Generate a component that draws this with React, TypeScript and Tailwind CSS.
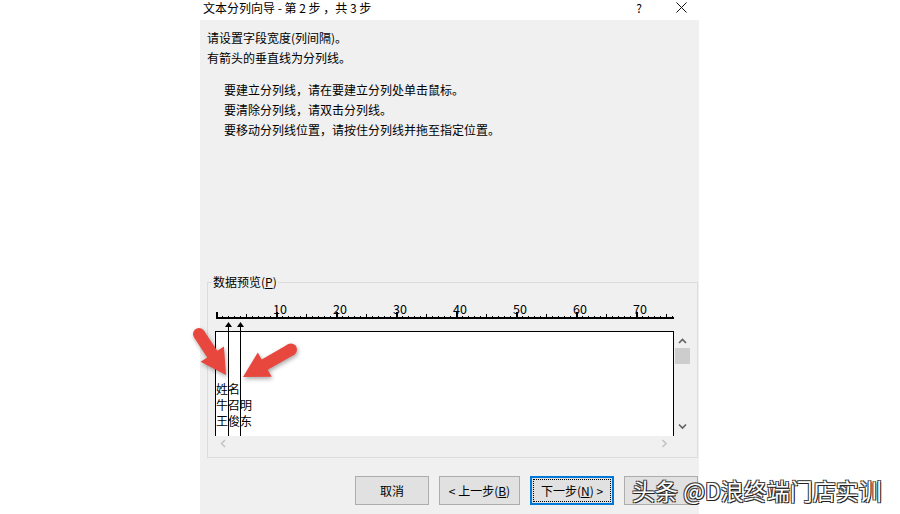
import React from "react";

const FONT = "'Noto Sans CJK SC', 'Microsoft YaHei', sans-serif";

function arrowPoints(tx: number, ty: number, hx: number, hy: number, sw: number, hw: number, hl: number) {
  const dx = hx - tx;
  const dy = hy - ty;
  const len = Math.sqrt(dx * dx + dy * dy);
  const ux = dx / len;
  const uy = dy / len;
  const nx = -uy;
  const ny = ux;
  const bx = hx - ux * hl;
  const by = hy - uy * hl;
  const pts = [
    [tx + nx * sw, ty + ny * sw],
    [bx + nx * sw, by + ny * sw],
    [bx + nx * hw, by + ny * hw],
    [hx, hy],
    [bx - nx * hw, by - ny * hw],
    [bx - nx * sw, by - ny * sw],
    [tx - nx * sw, ty - ny * sw],
  ];
  return pts.map((p) => `${p[0].toFixed(1)},${p[1].toFixed(1)}`).join(" ");
}

const ticks = Array.from({ length: 77 }, (_, k) => k);
const labels = [10, 20, 30, 40, 50, 60, 70];

function Ruler() {
  return (
    <svg width="476" height="34" className="block overflow-visible">
      <rect x="1" y="20" width="458" height="2" fill="#000" />
      {ticks.map((k) => {
        const x = 1 + 6 * k;
        const major = k % 10 === 0;
        const h = major ? 5 : k % 5 === 0 ? 3 : 1;
        return <rect key={k} x={x} y={20 - h} width={major ? 2 : 1} height={h} fill="#000" />;
      })}
      {labels.map((n) => (
        <text key={n} x={1 + 6 * n - 3} y={17} fontSize="12.5" fill="#000" fontFamily={FONT}>
          {n}
        </text>
      ))}
    </svg>
  );
}

function Chevron({ dir, color }: { dir: "up" | "down" | "left" | "right"; color: string }) {
  const d =
    dir === "up"
      ? "M1 5 L4.5 1.5 L8 5"
      : dir === "down"
      ? "M1 1.5 L4.5 5 L8 1.5"
      : dir === "left"
      ? "M5 1 L1.5 4.5 L5 8"
      : "M1.5 1 L5 4.5 L1.5 8";
  const w = dir === "up" || dir === "down" ? 9 : 7;
  const h = dir === "up" || dir === "down" ? 7 : 9;
  return (
    <svg width={w} height={h} className="block">
      <path d={d} fill="none" stroke={color} strokeWidth="1.6" />
    </svg>
  );
}

export default function App() {
  return (
    <div className="relative w-[900px] h-[514px] bg-white overflow-hidden flex text-black font-['Noto_Sans_CJK_SC','Microsoft_YaHei',sans-serif]">
      <div className="w-[200px] shrink-0" />
      <div className="w-[499px] shrink-0 flex flex-col">
        {/* Title bar */}
        <div className="h-[20px] flex items-start bg-white text-[12px] leading-[16px]">
          <span className="pl-[3px] whitespace-pre">文本分列向导 - 第 2 步 ，共 3 步</span>
          <span className="ml-auto w-[12px] text-center text-[12px] leading-[16px]">?</span>
          <span className="ml-[31px] mr-[12px] mt-[2px]">
            <svg width="11" height="11" className="block">
              <path d="M0.5 0.5 L10.5 10.5 M10.5 0.5 L0.5 10.5" stroke="#111" strokeWidth="1" />
            </svg>
          </span>
        </div>

        {/* Body */}
        <div className="flex-1 bg-[#f0f0f0] pl-[7px] pt-[8px] flex flex-col text-[12px] leading-[20px]">
          <p>请设置字段宽度(列间隔)。</p>
          <p>有箭头的垂直线为分列线。</p>
          <div className="mt-[12px] pl-[17px]">
            <p>要建立分列线，请在要建立分列处单击鼠标。</p>
            <p>要清除分列线，请双击分列线。</p>
            <p>要移动分列线位置，请按住分列线并拖至指定位置。</p>
          </div>

          <fieldset className="mt-[133px] w-[491px] border border-[#dcdcdc] pl-[7px] pb-[6px]">
            <legend className="-ml-[3px] px-[1px] leading-[18px]">
              数据预览(<span className="underline">P</span>)
            </legend>
            <div className="relative mt-[6px] w-[476px]">
              <Ruler />
              <div className="flex">
                <div className="w-[459px] h-[105px] bg-white border-t border-l border-r border-black pt-[49px] leading-[16px] overflow-hidden">
                  <div>姓名</div>
                  <div>牛召明</div>
                  <div>王俊东</div>
                </div>
                <div className="w-[17px] h-[105px] bg-[#f0f0f0] flex flex-col items-center pt-[7px]">
                  <Chevron dir="up" color="#606060" />
                  <div className="mt-[3px] w-[15px] h-[16px] bg-[#cdcdcd]" />
                  <div className="mt-auto mb-[6px]">
                    <Chevron dir="down" color="#606060" />
                  </div>
                </div>
              </div>
              <div className="w-[459px] h-[15px] bg-[#f0f0f0] flex items-center justify-between pl-[5px] pr-[6px]">
                <Chevron dir="left" color="#c4c4c4" />
                <Chevron dir="right" color="#c4c4c4" />
              </div>
              {/* column break markers */}
              <svg width="476" height="139" className="absolute left-0 top-0 pointer-events-none">
                <line x1="13.5" y1="28" x2="13.5" y2="139" stroke="#000" strokeWidth="1" />
                <line x1="25.5" y1="28" x2="25.5" y2="139" stroke="#000" strokeWidth="1" />
                <polygon points="13.5,25 10,30 17,30" fill="#000" />
                <polygon points="25.5,25 22,30 29,30" fill="#000" />
              </svg>
            </div>
          </fieldset>

          <div className="mt-[18px] flex justify-end gap-[10px] pr-[1px]">
            <button className="w-[74px] h-[29px] bg-[#e1e1e1] border border-[#adadad] flex items-center justify-center">
              取消
            </button>
            <button className="w-[81px] h-[29px] bg-[#e1e1e1] border border-[#adadad] flex items-center justify-center">
              &lt; 上一步(<span className="underline">B</span>)
            </button>
            <button className="w-[84px] h-[29px] bg-[#e1e1e1] border-2 border-[#0078d7] p-[1px] flex">
              <span className="flex-1 border border-dotted border-black flex items-center justify-center">
                下一步(<span className="underline">N</span>) &gt;
              </span>
            </button>
            <button className="w-[74px] h-[29px] bg-[#e1e1e1] border border-[#adadad]" />
          </div>
        </div>
      </div>

      {/* Red annotation arrows */}
      <svg
        width="900"
        height="514"
        className="absolute left-0 top-0 pointer-events-none drop-shadow-[1px_2px_2px_rgba(0,0,0,0.35)]"
      >
        <polygon points={arrowPoints(199, 334, 226, 375, 6, 14, 25)} fill="#e8473e" />
        <circle cx="199" cy="334" r="6" fill="#e8473e" />
        <polygon points={arrowPoints(292, 349, 243, 377, 6, 14, 25)} fill="#e8473e" />
        <circle cx="291" cy="349.5" r="6" fill="#e8473e" />
      </svg>

      {/* Watermark */}
      <div className="absolute left-[632px] top-[476px] text-[23px] leading-[28px] text-white whitespace-nowrap [text-shadow:1px_1px_0_#222,-1px_-1px_0_#444,1px_-1px_0_#444,-1px_1px_0_#444]">
        头条 @D浪终端门店实训
      </div>
    </div>
  );
}
